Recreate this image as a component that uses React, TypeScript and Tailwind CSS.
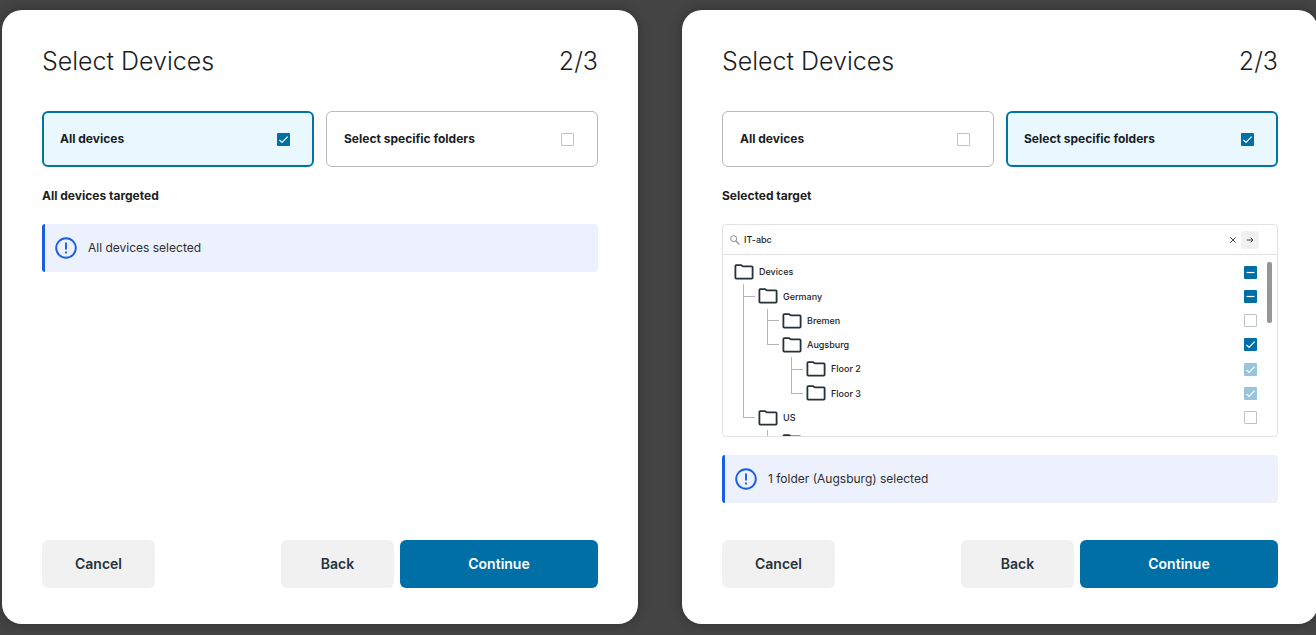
import { useEffect, useRef, useState } from "react";
import clsx from "clsx";

type Target = "all" | "folders";
type CheckState = "checked" | "mixed" | "inherited" | "empty";

interface FolderRow {
  name: string;
  // one entry per ancestor level, drawn left to right
  guides: ("line" | "branch" | "end" | "none")[];
  state?: CheckState;
}

const folders: FolderRow[] = [
  { name: "Devices", guides: [], state: "mixed" },
  { name: "Germany", guides: ["branch"], state: "mixed" },
  { name: "Bremen", guides: ["line", "branch"], state: "empty" },
  { name: "Augsburg", guides: ["line", "end"], state: "checked" },
  { name: "Floor 2", guides: ["line", "none", "branch"], state: "inherited" },
  { name: "Floor 3", guides: ["line", "none", "end"], state: "inherited" },
  { name: "US", guides: ["end"], state: "empty" },
  { name: "", guides: ["none", "branch"] },
];

function FolderIcon() {
  return (
    <svg width="20" height="16" viewBox="0 0 20 16" fill="none" className="shrink-0" aria-hidden="true">
      <path
        d="M1.4 13.8V2Q1.4 1.2 2.2 1.2H7.2L8.8 2.4H17.8Q18.6 2.4 18.6 3.2V13.8Q18.6 14.6 17.8 14.6H2.2Q1.4 14.6 1.4 13.8Z"
        stroke="#263238"
        strokeWidth="1.8"
        strokeLinejoin="round"
      />
    </svg>
  );
}

function SearchIcon() {
  return (
    <svg width="10" height="10" viewBox="0 0 10 10" fill="none" stroke="#8a8a8a" className="shrink-0" aria-hidden="true">
      <circle cx="3.7" cy="3.7" r="3" />
      <path d="M6 6L9.4 9.4" strokeWidth="1.2" />
    </svg>
  );
}

function AlertIcon() {
  return (
    <svg width="22" height="22" viewBox="0 0 22 22" fill="none" stroke="#1b5fe0" className="shrink-0" aria-hidden="true">
      <circle cx="11" cy="11" r="9.8" strokeWidth="1.9" />
      <path d="M11 5.6V12.4" strokeWidth="1.9" />
      <path d="M11 14.4V16.4" strokeWidth="1.9" />
    </svg>
  );
}

interface CheckboxProps {
  label?: string;
  state: CheckState;
  onChange?: () => void;
}

function Checkbox({ label, state, onChange }: CheckboxProps) {
  const ref = useRef<HTMLInputElement>(null);

  useEffect(() => {
    if (ref.current) ref.current.indeterminate = state === "mixed";
  }, [state]);

  return (
    <span className="grid shrink-0">
      <input
        ref={ref}
        type="checkbox"
        aria-label={label}
        checked={state === "checked" || state === "inherited"}
        disabled={state === "inherited"}
        onChange={() => onChange?.()}
        className={clsx(
          "appearance-none w-[13px] h-[13px] rounded-[1px] [grid-area:1/1]",
          state === "empty" && "bg-white border border-[#bcc4c9]",
          state === "inherited" && "bg-[#98c5dc]",
          (state === "checked" || state === "mixed") && "bg-[#006fa6]"
        )}
      />
      {state !== "empty" && (
        <svg viewBox="0 0 13 13" fill="none" stroke="white" className="w-[13px] h-[13px] [grid-area:1/1] pointer-events-none">
          {state === "mixed" ? (
            <path d="M2.5 6.5H10.5" strokeWidth="1.2" />
          ) : (
            <path d="M2.4 6.8L5 9.4L10.6 3.6" strokeWidth="1.2" />
          )}
        </svg>
      )}
    </span>
  );
}

function OptionCard({ text, selected, onSelect }: { text: string; selected: boolean; onSelect: () => void }) {
  return (
    <label
      className={clsx(
        "flex flex-1 items-center justify-between h-14 rounded-md cursor-pointer text-xs font-bold",
        selected ? "border-2 border-[#0073a8] bg-[#e9f7ff] pl-4 pr-[22px]" : "border border-[#b9b9b9] pl-[17px] pr-[23px]"
      )}
    >
      {text}
      <Checkbox state={selected ? "checked" : "empty"} onChange={onSelect} />
    </label>
  );
}

function Notice({ text }: { text: string }) {
  return (
    <div className="flex items-center gap-[11px] h-12 pl-[10px] rounded-[3px] border-l-3 border-[#1b5fe0] bg-[#ecf1fd] text-xs text-[#2b2f33]">
      <AlertIcon />
      <p>{text}</p>
    </div>
  );
}

function Guide({ kind }: { kind: FolderRow["guides"][number] }) {
  return (
    <span className="flex flex-col w-6 pl-[9px] pr-[3px] shrink-0 self-stretch">
      <span
        className={clsx(
          "flex-1 border-[#b5b5b5]",
          kind !== "none" && "border-l",
          (kind === "branch" || kind === "end") && "border-b"
        )}
      />
      <span className={clsx("flex-1 border-[#b5b5b5]", (kind === "line" || kind === "branch") && "border-l")} />
    </span>
  );
}

function FolderPicker() {
  const [query, setQuery] = useState("IT-abc");

  return (
    <div className="border border-[#e2e2e2] rounded-[4px] text-[9px] font-medium">
      <div className="flex items-center h-[30px] pl-[7px] pr-[18px] border-b border-[#e2e2e2]">
        <SearchIcon />
        <input
          type="text"
          aria-label="Search folders"
          value={query}
          onChange={(e) => setQuery(e.target.value)}
          className="flex-1 min-w-0 ml-1 outline-none"
        />
        <button aria-label="Clear" onClick={() => setQuery("")} className="cursor-pointer">
          <svg width="8" height="8" viewBox="0 0 8 8" fill="none" stroke="#3a4449">
            <path d="M1.3 1.3L6.7 6.7M6.7 1.3L1.3 6.7" />
          </svg>
        </button>
        <button
          aria-label="Search"
          className="flex items-center justify-center w-[18px] h-[18px] ml-1 rounded-[3px] bg-[#f1f1f1] cursor-pointer"
        >
          <svg width="8" height="8" viewBox="0 0 8 8" fill="none" stroke="#3a4449">
            <path d="M0.8 4H7M4.6 1.6L7 4L4.6 6.4" />
          </svg>
        </button>
      </div>

      <div className="flex h-[181px] overflow-hidden">
        <ul className="grid auto-rows-fr flex-1 h-[194px] mt-[5px] pl-[11px]">
          {folders.map((folder, i) => (
            <li key={i} className="flex items-center">
              {folder.guides.map((kind, level) => (
                <Guide key={level} kind={kind} />
              ))}
              <FolderIcon />
              <span className="flex-1 ml-[5px]">{folder.name}</span>
              {folder.state && <Checkbox label={folder.name} state={folder.state} />}
            </li>
          ))}
        </ul>
        <div className="w-[5px] h-[61px] mt-[7px] ml-[10px] mr-[5px] rounded-[2px] bg-[#969696]" />
      </div>
    </div>
  );
}

function DevicesDialog({ initialTarget }: { initialTarget: Target }) {
  const [target, setTarget] = useState<Target>(initialTarget);

  return (
    <section className="flex flex-col flex-1 px-10 pt-[35px] pb-9 rounded-[20px] bg-white shadow-[0_0_12px_rgba(0,0,0,0.3)]">
      <header className="flex items-center justify-between text-[25px] leading-8 font-light">
        <h1>Select Devices</h1>
        <span>2/3</span>
      </header>

      <div className="flex gap-3 mt-[34px]">
        <OptionCard text="All devices" selected={target === "all"} onSelect={() => setTarget("all")} />
        <OptionCard text="Select specific folders" selected={target === "folders"} onSelect={() => setTarget("folders")} />
      </div>

      <h2 className="mt-[21px] mb-5 text-xs font-bold">
        {target === "all" ? "All devices targeted" : "Selected target"}
      </h2>

      {target === "all" ? (
        <Notice text="All devices selected" />
      ) : (
        <div className="flex flex-col gap-[18px]">
          <FolderPicker />
          <Notice text="1 folder (Augsburg) selected" />
        </div>
      )}

      <footer className="flex gap-[6px] mt-auto pt-6 text-sm font-semibold text-[#263238]">
        <button className="w-[113px] h-12 mr-auto rounded-md bg-[#f1f1f1] cursor-pointer">Cancel</button>
        <button className="w-[113px] h-12 rounded-md bg-[#f1f1f1] cursor-pointer">Back</button>
        <button className="w-[198px] h-12 rounded-md bg-[#006fa6] text-white cursor-pointer">Continue</button>
      </footer>
    </section>
  );
}

export default function App() {
  return (
    <main className="min-h-screen flex overflow-hidden bg-[#444444] font-['Inter',sans-serif] text-[#1b1d1f]">
      <div className="flex flex-1 gap-11 pt-[10px] pb-[11px] pl-[2px] -mr-[2px]">
        <DevicesDialog initialTarget="all" />
        <DevicesDialog initialTarget="folders" />
      </div>
    </main>
  );
}
